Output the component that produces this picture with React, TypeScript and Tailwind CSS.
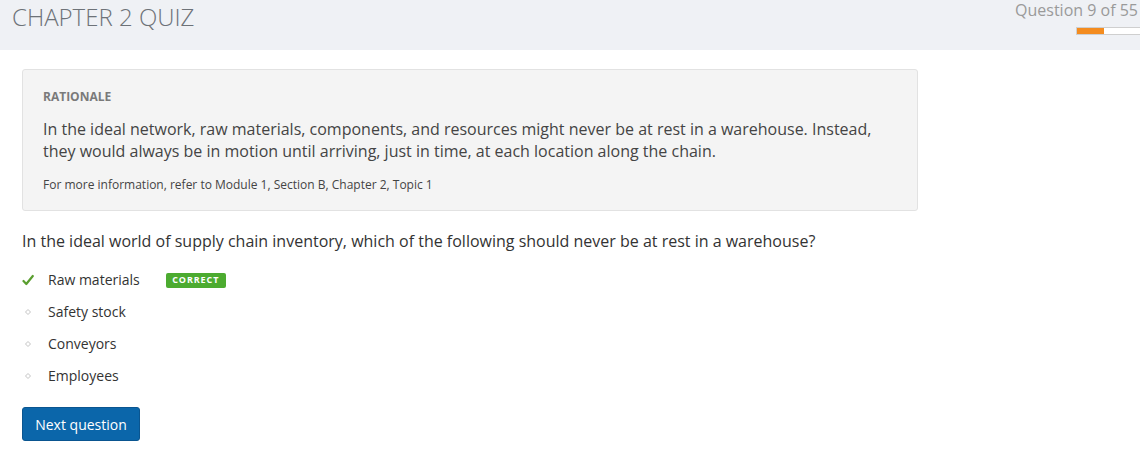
import React from "react";

const options = [
  { label: "Raw materials", correct: true },
  { label: "Safety stock", correct: false },
  { label: "Conveyors", correct: false },
  { label: "Employees", correct: false },
];

const Bullet = () => (
  <svg width="12" height="12" viewBox="0 0 12 12" className="shrink-0">
    <path d="M6 3.5 L8.5 6 L6 8.5 L3.5 6 Z" fill="none" stroke="#c4c4c4" strokeWidth="1" />
  </svg>
);

const Check = () => (
  <svg width="12" height="12" viewBox="0 0 12 12" className="shrink-0">
    <path d="M1.5 7 L4.3 10 L10.8 2" fill="none" stroke="#5a9e2f" strokeWidth="2.2" strokeLinecap="round" strokeLinejoin="round" />
  </svg>
);

const App = () => {
  const current = 9;
  const total = 55;
  const pct = (current / total) * 100 * 2.6;

  return (
    <div className="min-h-screen bg-white font-['Open_Sans',sans-serif] text-[#333]">
      {/* Header */}
      <div className="flex h-[50px] items-start justify-between bg-[#eff1f5]">
        <h1 className="pl-3 pt-[1px] text-[24px] font-light leading-[32px] text-[#6d7278]">
          CHAPTER 2 QUIZ
        </h1>
        <div className="flex flex-col items-end">
          <span className="pr-[2px] text-[16px] leading-[20px] text-[#9a9a9a]">
            Question {current} of {total}
          </span>
          <div className="mt-[7px] h-[8px] w-[64px] border border-[#cfcfcf] border-r-0 bg-white">
            <div className="h-full bg-[#f48c1f]" style={{ width: `${Math.min(pct, 100)}%` }} />
          </div>
        </div>
      </div>

      <div className="px-[22px]">
        {/* Rationale */}
        <div className="mt-[19px] w-[896px] rounded-[3px] border border-[#e2e2e2] bg-[#f4f4f4] px-5 pb-[17px] pt-[18px]">
          <div className="text-[12px] font-bold leading-[17px] text-[#7a7a7a]">RATIONALE</div>
          <p className="mt-[13px] text-[16px] leading-[22px] text-[#444]">
            In the ideal network, raw materials, components, and resources might never be at rest in a warehouse. Instead,
            they would always be in motion until arriving, just in time, at each location along the chain.
          </p>
          <p className="mt-[14px] text-[12px] leading-[17px] text-[#444]">
            For more information, refer to Module 1, Section B, Chapter 2, Topic 1
          </p>
        </div>

        {/* Question */}
        <p className="mt-[19px] text-[16px] leading-[22px] text-[#333]">
          In the ideal world of supply chain inventory, which of the following should never be at rest in a warehouse?
        </p>

        <ul className="mt-[12px]">
          {options.map((o) => (
            <li key={o.label} className="flex h-8 items-center">
              {o.correct ? <Check /> : <Bullet />}
              <span className="ml-[14px] text-[14px] leading-[20px] text-[#333]">{o.label}</span>
              {o.correct && (
                <span className="ml-[26px] flex h-[15px] w-[60px] items-center justify-center rounded-[2px] bg-[#4cab30] text-[9px] font-bold tracking-[0.1em] text-white">
                  CORRECT
                </span>
              )}
            </li>
          ))}
        </ul>

        <button className="mt-[15px] h-[34px] w-[118px] rounded-[3px] border border-[#0a5590] bg-[#0b66aa] text-[14px] font-medium text-white">
          Next question
        </button>
      </div>
    </div>
  );
};

export default App;
